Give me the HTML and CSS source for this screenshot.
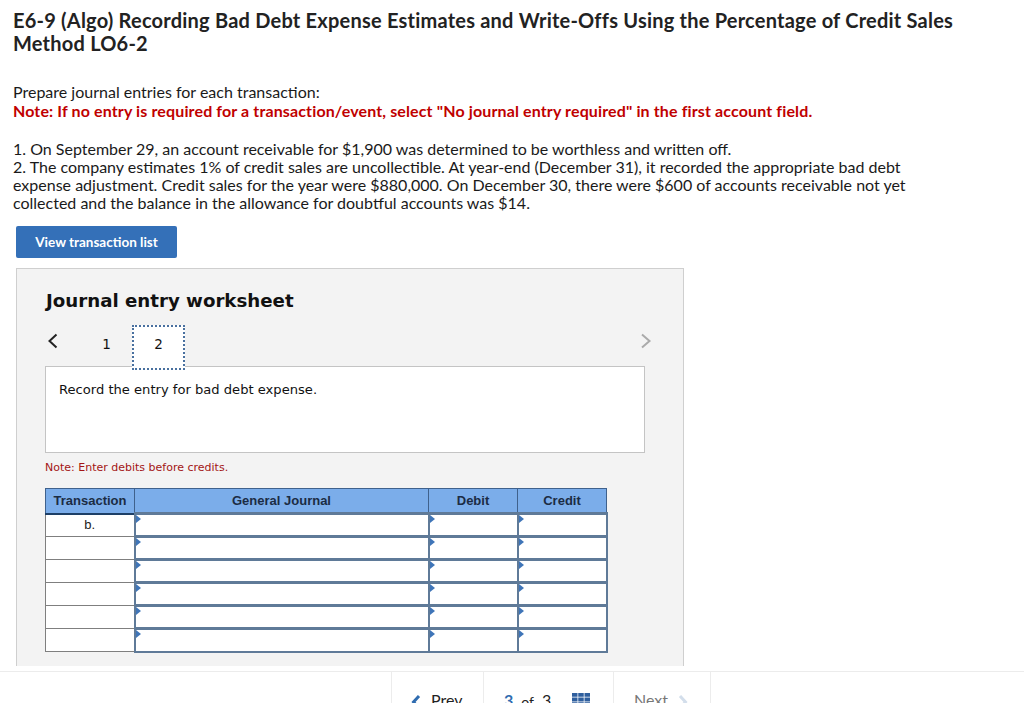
FILE: index.html
```html
<!DOCTYPE html>
<html lang="en">
<head>
    <meta charset="UTF-8">
    <title>Journal entry worksheet</title>
    <link rel="stylesheet" href="styles.css">
</head>
<body>
    <div class="question">
        <h1 class="question-title">E6-9 (Algo) Recording Bad Debt Expense Estimates and Write-Offs Using the Percentage of Credit Sales Method LO6-2</h1>
        <p class="prompt">Prepare journal entries for each transaction:</p>
        <p class="prompt-note">Note: If no entry is required for a transaction/event, select "No journal entry required" in the first account field.</p>
        <p class="scenario">1. On September 29, an account receivable for $1,900 was determined to be worthless and written off.<br>2. The company estimates 1% of credit sales are uncollectible. At year-end (December 31), it recorded the appropriate bad debt expense adjustment. Credit sales for the year were $880,000. On December 30, there were $600 of accounts receivable not yet collected and the balance in the allowance for doubtful accounts was $14.</p>
        <button class="list-btn">View transaction list</button>
    </div>

    <div class="worksheet">
        <h2 class="worksheet-title">Journal entry worksheet</h2>
        <div class="pager">
            <svg class="arrow" width="12" height="16" viewBox="0 0 12 16"><path d="M9.5 1.5 L2.5 8 L9.5 14.5" fill="none" stroke="#222" stroke-width="2"/></svg>
            <span class="tab">1</span>
            <span class="tab tab-active">2</span>
            <svg class="arrow arrow-next" width="12" height="16" viewBox="0 0 12 16"><path d="M2 1.5 L9.5 8 L2 14.5" fill="none" stroke="#aaa" stroke-width="2"/></svg>
        </div>
        <div class="instruction">Record the entry for bad debt expense.</div>
        <p class="enter-note">Note: Enter debits before credits.</p>

        <table class="journal">
            <thead>
                <tr>
                    <th class="col-trans">Transaction</th>
                    <th class="col-account">General Journal</th>
                    <th class="col-amt">Debit</th>
                    <th class="col-amt">Credit</th>
                </tr>
            </thead>
            <tbody>
                <tr><td class="trans">b.</td><td class="cell"></td><td class="cell"></td><td class="cell"></td></tr>
                <tr><td class="trans"></td><td class="cell"></td><td class="cell"></td><td class="cell"></td></tr>
                <tr><td class="trans"></td><td class="cell"></td><td class="cell"></td><td class="cell"></td></tr>
                <tr><td class="trans"></td><td class="cell"></td><td class="cell"></td><td class="cell"></td></tr>
                <tr><td class="trans"></td><td class="cell"></td><td class="cell"></td><td class="cell"></td></tr>
                <tr><td class="trans"></td><td class="cell"></td><td class="cell"></td><td class="cell"></td></tr>
            </tbody>
        </table>
    </div>

    <div class="footer">
        <div class="footer-nav">
            <div class="nav-item nav-prev">
                <svg width="10" height="14" viewBox="0 0 10 14"><path d="M8 1 L2.5 7 L8 13" fill="none" stroke="#2f6cb0" stroke-width="3"/></svg>
                <span>Prev</span>
            </div>
            <div class="nav-item nav-count">
                <b>3</b><small>of</small><span>3</span>
                <svg class="grid-icon" width="18" height="13" viewBox="0 0 18 13">
                    <path d="M0 0h5.500v3.800H0zM6.250 0h5.500v3.800h-5.500zM12.500 0h5.500v3.800h-5.500zM0 4.600h5.500v3.800H0zM6.250 4.600h5.500v3.800h-5.500zM12.500 4.600h5.500v3.800h-5.500zM0 9.200h5.500v3.800H0zM6.250 9.200h5.500v3.800h-5.500zM12.500 9.200h5.500v3.800h-5.500z" fill="#2f5f9e"/>
                </svg>
            </div>
            <div class="nav-item nav-next">
                <span>Next</span>
                <svg width="10" height="14" viewBox="0 0 10 14"><path d="M2 1 L7.500 7 L2 13" fill="none" stroke="#d3deeb" stroke-width="3"/></svg>
            </div>
        </div>
    </div>
</body>
</html>
```

FILE: styles.css
```css
* {
    box-sizing: border-box;
    margin: 0;
    padding: 0;
}

html, body {
    height: 703px;
    overflow: hidden;
}

body {
    background: #ffffff;
    color: #1a1a1a;
    font-family: 'Lato', sans-serif;
}

.question {
    padding: 9px 60px 0 13px;
}

.question-title {
    font-size: 20px;
    line-height: 23px;
    font-weight: 700;
    letter-spacing: 0.22px;
    color: #222;
}

.prompt {
    margin-top: 28px;
    font-size: 16px;
    line-height: 18px;
}

.prompt-note {
    font-size: 16px;
    line-height: 19px;
    font-weight: 700;
    letter-spacing: 0.13px;
    color: #c00000;
}

.scenario {
    margin-top: 20px;
    padding-right: 30px;
    font-size: 16px;
    line-height: 18px;
}

.list-btn {
    display: block;
    width: 161px;
    height: 32px;
    margin: 14px 0 0 3px;
    background: #3470b8;
    border: 0;
    border-radius: 2px;
    color: #fff;
    font-family: 'Lato', sans-serif;
    font-size: 13.500px;
    font-weight: 700;
}

.worksheet {
    width: 668px;
    height: 398px;
    margin: 10px 0 0 16px;
    padding: 20px 28px 0;
    background: #f3f3f3;
    border: 1px solid #cfcfcf;
    border-bottom: 0;
    font-family: 'DejaVu Sans', sans-serif;
}

.worksheet-title {
    margin-left: 1px;
    font-size: 18.200px;
    line-height: 23px;
    font-weight: 700;
    color: #111;
}

.pager {
    display: flex;
    align-items: center;
    height: 45px;
    margin-top: 13px;
    position: relative;
    z-index: 1;
}

.arrow {
    margin: -13px 0 0 2px;
}

.arrow-next {
    margin-left: auto;
    margin-right: 3px;
}

.tab {
    width: 53px;
    height: 45px;
    margin-left: 21px;
    padding-bottom: 8px;
    display: flex;
    align-items: center;
    justify-content: center;
    font-size: 13.500px;
    color: #111;
}

.tab-active {
    margin-left: -1px;
    background: #fff;
    border: 2px dotted #49709f;
}

.instruction {
    width: 600px;
    height: 87px;
    margin-top: -4px;
    padding: 14px 13px 0;
    background: #fff;
    border: 1px solid #c4c4c4;
    font-size: 13.100px;
    line-height: 18px;
    color: #111;
}

.enter-note {
    margin-top: 8px;
    font-size: 11px;
    line-height: 14px;
    color: #a31515;
}

.journal {
    width: 561px;
    margin-top: 13px;
    border-collapse: collapse;
    table-layout: fixed;
    font-family: 'Liberation Sans', sans-serif;
}

.journal th {
    height: 25px;
    background: #7badea;
    border: 1px solid #3f618c;
    border-bottom: 2px solid #1d3f66;
    font-size: 13px;
    color: #1b2c44;
}

.col-trans {
    width: 89px;
}

.col-account {
    width: 294px;
}

.col-amt {
    width: 89px;
}

.journal td {
    height: 23px;
    background: #fff;
}

.trans {
    padding-bottom: 2px;
    border: 1px solid #7f7f7f;
    font-size: 13px;
    text-align: center;
    color: #222;
}

.cell {
    position: relative;
    border: 2px solid #5f7a98;
    border-top-width: 3px;
}

.cell::before {
    content: '';
    position: absolute;
    top: 0;
    left: 0;
    border-left: 5px solid #3f75b8;
    border-top: 4px solid transparent;
    border-bottom: 4px solid transparent;
}

.footer {
    margin-top: 5px;
    height: 40px;
    border-top: 1px solid #ececec;
}

.footer-nav {
    display: flex;
    margin-left: 391px;
    height: 40px;
    font-size: 16px;
}

.nav-item {
    display: flex;
    align-items: flex-start;
    padding-top: 18px;
    border-left: 1px solid #ececec;
}

.nav-prev {
    width: 92px;
    padding-left: 19px;
    gap: 10px;
    color: #222;
}

.nav-prev svg {
    margin-top: 5px;
}

.nav-count {
    width: 130px;
    padding-left: 20px;
    color: #222;
}

.nav-count b {
    color: #2f6cb0;
    font-size: 16px;
    line-height: 19px;
}

.nav-count small {
    margin: 3px 8px 0;
    font-size: 14px;
}

.nav-count span {
    font-size: 16px;
    line-height: 19px;
}

.grid-icon {
    margin: 3px 0 0 21px;
}

.nav-next {
    width: 98px;
    padding-left: 20px;
    gap: 10px;
    color: #777;
    border-right: 1px solid #ececec;
}

.nav-next svg {
    margin-top: 5px;
}
```
